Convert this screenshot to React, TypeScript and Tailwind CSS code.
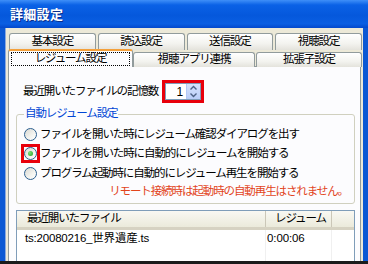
import React from 'react';

// XP-style radio button
function Radio({ checked }: { checked?: boolean }) {
  return (
    <span className="w-[13px] h-[13px] rounded-full border border-[#2c5f8f] bg-[linear-gradient(135deg,#d8d8d2_0%,#f4f4f0_60%,#ffffff_100%)] flex items-center justify-center shrink-0">
      {checked && (
        <span className="w-[5px] h-[5px] rounded-full bg-[radial-gradient(circle_at_35%_35%,#7be07a,#21a121)]" />
      )}
    </span>
  );
}

function SpinArrows() {
  return (
    <svg width="9" height="13" viewBox="0 0 9 13">
      <path d="M1.5 4.5 L4.5 1.5 L7.5 4.5" fill="none" stroke="#4d6185" strokeWidth="1.4" />
      <path d="M1.5 8.5 L4.5 11.5 L7.5 8.5" fill="none" stroke="#4d6185" strokeWidth="1.4" />
    </svg>
  );
}

const tabBg = 'bg-[linear-gradient(to_bottom,#ffffff,#f3f3ef_60%,#e4e3dc)]';

export default function App() {
  return (
    <div className="w-[368px] h-[264px] overflow-hidden bg-[#0b58d4] flex flex-col [font-family:'Liberation_Sans','Noto_Sans_CJK_JP',sans-serif] text-[11.5px] tracking-[-1.1px] leading-none text-black">
      {/* title bar */}
      <div className="h-[28px] shrink-0 bg-[linear-gradient(to_bottom,#3f8ff8_0%,#0a61e6_18%,#0558dc_55%,#0a5ee2_85%,#0348cc_100%)] flex items-center pl-[10px]">
        <span className="text-white font-bold text-[13px] tracking-[0.3px] [text-shadow:1px_1px_0_#0a2f8c]">詳細設定</span>
      </div>

      {/* body */}
      <div className="flex-1 flex flex-col ml-[5px] mr-[5px] bg-[#ece9d8] border-l border-[#8aa8dc] pt-[5px] pl-[2px] pr-[1px]">
        {/* back row of tabs */}
        <div className="flex h-[17px] gap-[2px] pl-[1px]">
          {['基本設定', '読込設定', '送信設定', '視聴設定'].map((t) => (
            <div
              key={t}
              className={`flex-1 flex items-center justify-center border border-b-0 border-[#919b9c] rounded-t-[3px] ${tabBg}`}
            >
              {t}
            </div>
          ))}
        </div>

        {/* front row of tabs */}
        <div className="flex h-[17px] items-end relative z-10">
          <div className="w-[125px] h-[18px] flex items-center justify-center border border-b-0 border-[#919b9c] rounded-t-[3px] bg-[#fcfcfe] border-t-[2px] border-t-[#f4a03a] px-[2px] pb-[1px]">
            <span className="w-full h-[14px] border border-dotted border-black flex items-center justify-center">レジューム設定</span>
          </div>
          <div className={`w-[122px] h-[15px] flex items-center justify-center border border-b-0 border-[#919b9c] rounded-t-[3px] ${tabBg}`}>
            視聴アプリ連携
          </div>
          <div className={`flex-1 h-[15px] ml-[1px] flex items-center justify-center border border-b-0 border-[#919b9c] rounded-t-[3px] ${tabBg}`}>
            拡張子設定
          </div>
        </div>

        {/* tab page */}
        <div className="flex-1 w-[353px] bg-[#fcfcfe] border border-[#919b9c] border-b-0 mt-[-1px] flex flex-col">
          {/* recent files count */}
          <div className="flex items-center pl-[14px] pt-[12px] h-[37px]">
            <span>最近開いたファイルの記憶数</span>
            <div className="ml-[4px] border-[3px] border-[#e8000b] w-[42px] h-[23px] flex tracking-normal">
              <div className="flex-1 bg-white border border-[#7f9db9] flex items-center">
                <span className="flex-1 text-right pr-[3px] text-[12px]">1</span>
                <span className="w-[14px] h-full bg-[linear-gradient(to_bottom,#d7e3fc,#b9cdf8)] border-l border-[#b4c8f6] flex items-center justify-center">
                  <SpinArrows />
                </span>
              </div>
            </div>
          </div>

          {/* group box */}
          <div className="relative mt-[10px] ml-[7px] w-[339px] h-[90px] border border-[#d0d0bf] rounded-[3px] flex flex-col">
            <span className="absolute left-[7px] top-[-7px] px-[1px] bg-[#fcfcfe] text-[#0046d5]">自動レジューム設定</span>
            <div className="flex flex-col pt-[13px] pl-[7px] gap-[6px]">
              <div className="flex items-center gap-[3px] h-[13px]">
                <Radio />
                <span>ファイルを開いた時にレジューム確認ダイアログを出す</span>
              </div>
              <div className="flex items-center gap-[3px] h-[13px]">
                <span className="-ml-[3px] border-[3px] border-[#e8000b] w-[19px] h-[19px] flex items-center justify-center">
                  <Radio checked />
                </span>
                <span className="-ml-[3px]">ファイルを開いた時に自動的にレジュームを開始する</span>
              </div>
              <div className="flex items-center gap-[3px] h-[13px] mt-[1px]">
                <Radio />
                <span>プログラム起動時に自動的にレジューム再生を開始する</span>
              </div>
            </div>
            <div className="text-right pr-[6px] mt-[6px] text-[#e2441c]">リモート接続時は起動時の自動再生はされません。</div>
          </div>

          {/* recent files list */}
          <div className="mt-[6px] ml-[7px] w-[339px] flex-1 border border-[#7f9db9] border-b-0 bg-white flex flex-col">
            <div className="flex h-[19px] bg-[linear-gradient(to_bottom,#f9f8f3,#ebeadb)] border-b-[3px] border-[#d6d2c2]">
              <div className="w-[249px] flex items-center pl-[10px] border-r border-[#cbc7b8]">最近開いたファイル</div>
              <div className="w-[66px] flex items-center pl-[9px] border-r border-[#cbc7b8]">レジューム</div>
              <div className="flex-1" />
            </div>
            <div className="flex h-[17px]">
              <div className="w-[249px] flex items-center pl-[8px] border-r border-[#f0f0f0] tracking-[-0.2px]">ts:20080216_世界遺産.ts</div>
              <div className="w-[66px] flex items-center pl-[1px] border-r border-[#f0f0f0] tracking-[-0.1px]">0:00:06</div>
              <div className="flex-1" />
            </div>
            <div className="flex flex-1">
              <div className="w-[249px] border-r border-[#f0f0f0]" />
              <div className="w-[66px] border-r border-[#f0f0f0]" />
            </div>
          </div>
        </div>
      </div>
      <div className="h-[3px] shrink-0 bg-[#1b1b1b]" />
    </div>
  );
}
